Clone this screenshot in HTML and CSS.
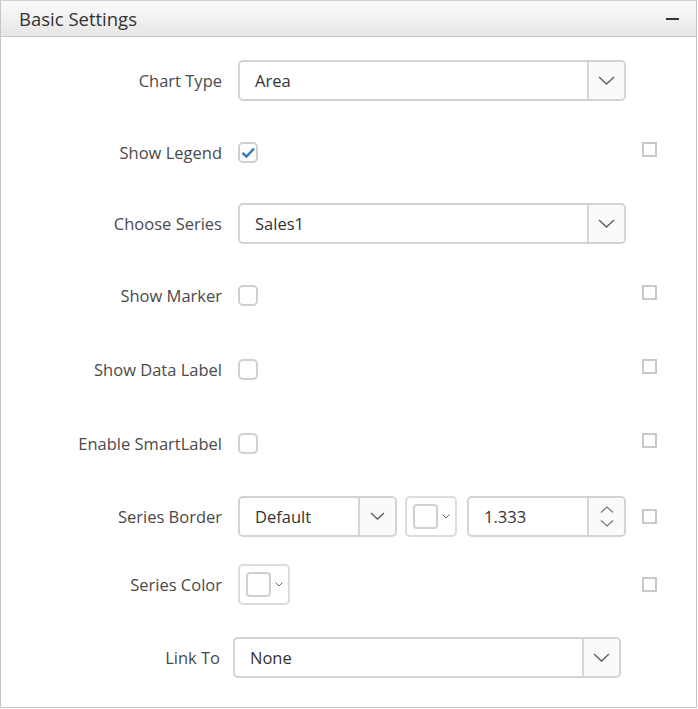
FILE: index.html
```html
<!DOCTYPE html>
<html>
<head>
<meta charset="utf-8">
<link rel="stylesheet" href="styles.css">
</head>
<body>
<div class="panel">
  <div class="panel-header">
    <span class="panel-title">Basic Settings</span>
    <span class="collapse"></span>
  </div>
  <div class="panel-body">
    <div class="row">
      <label class="label">Chart Type</label>
      <div class="select"><span class="value">Area</span><span class="drop"><svg width="17" height="9" viewBox="0 0 17 9"><polyline points="1,1 8.5,8 16,1" fill="none" stroke="#5c5c5c" stroke-width="1.3"/></svg></span></div>
    </div>
    <div class="row">
      <label class="label">Show Legend</label>
      <div class="control"><span class="check"><svg width="16" height="17" viewBox="0 0 16 17"><polyline points="2.5,9 6.5,12.5 14,4.5" fill="none" stroke="#2f79c4" stroke-width="2.4"/></svg></span></div>
      <span class="square square-top"></span>
    </div>
    <div class="row row-up">
      <label class="label">Choose Series</label>
      <div class="select"><span class="value">Sales1</span><span class="drop"><svg width="17" height="9" viewBox="0 0 17 9"><polyline points="1,1 8.5,8 16,1" fill="none" stroke="#5c5c5c" stroke-width="1.3"/></svg></span></div>
    </div>
    <div class="row">
      <label class="label">Show Marker</label>
      <div class="control"><span class="check"></span></div>
      <span class="square square-top"></span>
    </div>
    <div class="row row-down2">
      <label class="label">Show Data Label</label>
      <div class="control"><span class="check"></span></div>
      <span class="square square-top"></span>
    </div>
    <div class="row row-down2">
      <label class="label">Enable SmartLabel</label>
      <div class="control"><span class="check"></span></div>
      <span class="square square-top"></span>
    </div>
    <div class="row row-down1">
      <label class="label">Series Border</label>
      <div class="control multi">
        <div class="select select-short"><span class="value">Default</span><span class="drop"><svg width="15" height="8" viewBox="0 0 15 8"><polyline points="1,1 7.5,7 14,1" fill="none" stroke="#5c5c5c" stroke-width="1.3"/></svg></span></div>
        <div class="picker"><span class="swatch"></span><svg width="8" height="5" viewBox="0 0 8 5"><polyline points="0.5,0.5 4,4 7.5,0.5" fill="none" stroke="#666" stroke-width="1"/></svg></div>
        <div class="select numeric"><span class="value">1.333</span><span class="spin"><svg width="14" height="7" viewBox="0 0 14 7"><polyline points="1,6.5 7,1 13,6.5" fill="none" stroke="#777" stroke-width="1.2"/></svg><svg width="14" height="7" viewBox="0 0 14 7"><polyline points="1,0.5 7,6 13,0.5" fill="none" stroke="#777" stroke-width="1.2"/></svg></span></div>
      </div>
      <span class="square"></span>
    </div>
    <div class="row row-up3">
      <label class="label">Series Color</label>
      <div class="control"><div class="picker picker-tall"><span class="swatch"></span><svg width="8" height="5" viewBox="0 0 8 5"><polyline points="0.5,0.5 4,4 7.5,0.5" fill="none" stroke="#666" stroke-width="1"/></svg></div></div>
      <span class="square"></span>
    </div>
    <div class="row row-link row-down1">
      <label class="label">Link To</label>
      <div class="select"><span class="value">None</span><span class="drop"><svg width="17" height="9" viewBox="0 0 17 9"><polyline points="1,1 8.5,8 16,1" fill="none" stroke="#5c5c5c" stroke-width="1.3"/></svg></span></div>
    </div>
  </div>
</div>
</body>
</html>
```
FILE: styles.css
```css
html, body {
  margin: 0;
  padding: 0;
  background: #fff;
}
body {
  font-family: "Open Sans", "Noto Sans", sans-serif;
  color: #333;
}
.panel {
  width: 697px;
  box-sizing: border-box;
  border: 1px solid #c6c6c6;
  border-top-color: #d0d0d0;
  background: #fff;
}
.panel-header {
  height: 36px;
  box-sizing: border-box;
  display: flex;
  align-items: center;
  justify-content: space-between;
  padding: 0 17px 0 18px;
  background: linear-gradient(#fbfbfb, #e6e6e6);
  border-bottom: 1px solid #c8c8c8;
}
.panel-title {
  font-size: 18.5px;
  color: #333;
}
.collapse {
  width: 13px;
  height: 2px;
  background: #333;
  margin-top: 1px;
}
.panel-body {
  padding: 7px 0 14px 0;
}
.row {
  height: 72px;
  display: grid;
  grid-template-columns: 221px 388px 15px;
  column-gap: 16px;
  align-items: center;
}
.row-up {
  margin-top: -1px;
}
.row-down1 {
  margin-top: 1px;
}
.row-down2 {
  margin-top: 2px;
}
.row-up3 {
  margin-top: -4px;
}
.row-link {
  grid-template-columns: 219px 388px;
  column-gap: 13px;
}
.label {
  text-align: right;
  font-size: 16.5px;
  color: #4a4a4a;
}
.control {
  display: flex;
  align-items: center;
}
.select {
  height: 41px;
  box-sizing: border-box;
  border: 2px solid #d3d3d3;
  border-radius: 5px;
  display: flex;
  align-items: stretch;
  background: #fff;
  overflow: hidden;
}
.value {
  flex: 1;
  display: flex;
  align-items: center;
  padding-left: 15px;
  font-size: 16.5px;
  color: #333;
}
.drop {
  width: 35px;
  border-left: 2px solid #d6d6d6;
  background: #fafafa;
  display: flex;
  align-items: center;
  justify-content: center;
}
.check {
  width: 20px;
  height: 21px;
  box-sizing: border-box;
  border: 2px solid #d0d0d0;
  border-radius: 5px;
  display: flex;
  align-items: center;
  justify-content: center;
}
.square {
  width: 15px;
  height: 15px;
  box-sizing: border-box;
  border: 2px solid #c9c9c9;
}
.square-top {
  margin-top: -6px;
}
.multi {
  gap: 8px;
}
.select-short {
  width: 159px;
}
.picker {
  width: 52px;
  height: 41px;
  box-sizing: border-box;
  border: 2px solid #dcdcdc;
  border-radius: 5px;
  display: flex;
  align-items: center;
  padding-left: 6px;
  gap: 4px;
  margin-right: 2px;
}
.picker-tall {
  margin-right: 0;
}
.swatch {
  width: 25px;
  height: 25px;
  box-sizing: border-box;
  border: 2px solid #d0d0d0;
  border-radius: 4px;
  background: #fff;
}
.numeric {
  width: 159px;
}
.spin {
  width: 35px;
  border-left: 2px solid #d6d6d6;
  background: #fafafa;
  display: flex;
  flex-direction: column;
  align-items: center;
  justify-content: center;
  gap: 7px;
}
```
